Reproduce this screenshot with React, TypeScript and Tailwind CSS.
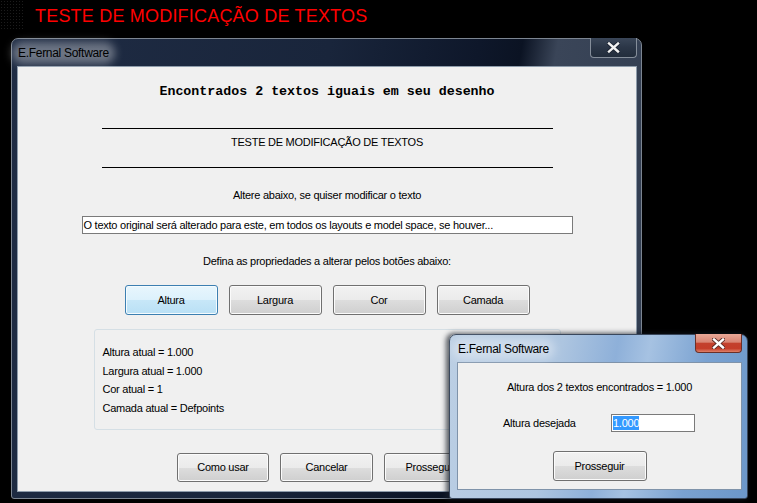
import React from "react";

const BTN =
  "flex items-center justify-center rounded-[3px] border border-[#707070] bg-[linear-gradient(to_bottom,#f2f2f2_0%,#ebebeb_50%,#dddddd_51%,#cfcfcf_100%)] shadow-[inset_0_0_0_1px_#fbfbfb] text-[11px] tracking-[-0.25px] text-black";
const BTN_FOCUS =
  "flex items-center justify-center rounded-[3px] border border-[#3c7fb1] bg-[linear-gradient(to_bottom,#e8f6fd_0%,#dcf1fc_50%,#c7e7f8_51%,#b9e0f5_100%)] shadow-[inset_0_0_0_1px_#f4fbfe] text-[11px] tracking-[-0.25px] text-black";

function CloseX({ color, outline }: { color: string; outline?: string }) {
  return (
    <svg width="13" height="11" viewBox="0 0 13 11">
      {outline && (
        <path d="M2 1.5 L11 9.5 M11 1.5 L2 9.5" stroke={outline} strokeWidth="4.2" strokeLinecap="square" />
      )}
      <path d="M2 1.5 L11 9.5 M11 1.5 L2 9.5" stroke={color} strokeWidth="2.4" strokeLinecap="square" />
    </svg>
  );
}

function TitleText() {
  return (
    <div className="relative ml-[1px] mt-[6px] h-[16px] flex items-center">
      <div className="absolute left-[-6px] right-[-6px] top-[-3px] bottom-[-3px] rounded-full bg-white/35 blur-[4px]" />
      <span className="relative text-[12px] leading-[16px] tracking-[-0.3px] text-black font-['Liberation_Sans',Arial,sans-serif]">
        E.Fernal Software
      </span>
    </div>
  );
}

export default function App() {
  return (
    <div className="relative w-[757px] h-[503px] overflow-hidden bg-black font-['Liberation_Sans',Arial,sans-serif]">
      <div className="absolute left-0 top-0 w-[24px] h-[30px] bg-[radial-gradient(#1c1c1c_0.8px,transparent_0.9px)] bg-[length:3px_3px]" />
      <div className="pl-[35px] pt-[6px] text-[18px] leading-[20px] tracking-[0.2px] text-[#ff0000]">
        TESTE DE MODIFICAÇÃO DE TEXTOS
      </div>

      {/* Main window */}
      <div className="absolute left-[11px] top-[38px] w-[631px] h-[461px] rounded-t-[7px] rounded-b-[3px] border border-[#7c8591] bg-[linear-gradient(100deg,#1f2c44_0%,#19253b_45%,#0e172a_66%,#0b1323_72%,#3a4558_77%,#303c50_100%)] flex flex-col pl-[5px] pr-[4px] pb-[6px]">
        <div className="h-[27px] flex justify-between items-start">
          <TitleText />
          <div className="mt-[-1px] w-[47px] h-[20px] rounded-b-[4px] border border-[#858e9a] border-t-0 bg-[linear-gradient(to_bottom,#3a4658_0%,#2b3647_50%,#222d3c_100%)] flex items-center justify-center">
            <CloseX color="#f2f2f2" outline="#1a2230" />
          </div>
        </div>
        <div className="flex-1 border border-[#8e9cab] bg-[#f0f0f0] flex flex-col items-center">
          <div className="mt-[17px] h-[16px] leading-[16px] text-[13.3px] font-bold text-black font-['Liberation_Mono',monospace]">
            Encontrados 2 textos iguais em seu desenho
          </div>
          <div className="mt-[28px] h-[1px] w-[451px] bg-black" />
          <div className="mt-[5px] h-[16px] leading-[16px] text-[11px] tracking-[-0.25px] text-black">
            TESTE DE MODIFICAÇÃO DE TEXTOS
          </div>
          <div className="mt-[17px] h-[1px] w-[451px] bg-black" />
          <div className="mt-[19px] h-[16px] leading-[16px] text-[11px] tracking-[-0.25px] text-black">
            Altere abaixo, se quiser modificar o texto
          </div>
          <div className="mt-[13px] h-[18px] w-[491px] border border-[#7a7a7a] bg-white pl-[1px] flex items-center text-[11px] tracking-[-0.25px] text-black whitespace-nowrap overflow-hidden">
            O texto original será alterado para este, em todos os layouts e model space, se houver...
          </div>
          <div className="mt-[19px] h-[16px] leading-[16px] text-[11px] tracking-[-0.25px] text-black">
            Defina as propriedades a alterar pelos botões abaixo:
          </div>
          <div className="mt-[16px] flex gap-[11px]">
            <div className={`${BTN_FOCUS} w-[93px] h-[30px]`}>Altura</div>
            <div className={`${BTN} w-[93px] h-[30px]`}>Largura</div>
            <div className={`${BTN} w-[93px] h-[30px]`}>Cor</div>
            <div className={`${BTN} w-[93px] h-[30px]`}>Camada</div>
          </div>
          <div className="mt-[14px] h-[101px] w-[467px] rounded-[3px] border border-[#d5dfe5] pl-[8px] pt-[13px] text-[11px] leading-[18.7px] tracking-[-0.25px] text-black">
            <div>Altura atual = 1.000</div>
            <div>Largura atual = 1.000</div>
            <div>Cor atual = 1</div>
            <div>Camada atual = Defpoints</div>
          </div>
          <div className="mt-[23px] flex gap-[11px]">
            <div className={`${BTN} w-[92px] h-[29px]`}>Como usar</div>
            <div className={`${BTN} w-[93px] h-[29px]`}>Cancelar</div>
            <div className={`${BTN} w-[93px] h-[29px]`}>Prosseguir</div>
          </div>
        </div>
      </div>

      {/* Secondary dialog */}
      <div className="absolute left-[449px] top-[334px] w-[299px] h-[165px] rounded-t-[7px] rounded-b-[3px] border border-[#39475c] bg-[linear-gradient(100deg,#bccfe4_0%,#adc5e0_35%,#8eb0d9_52%,#a6c2e2_62%,#7aa2d1_80%,#6c97c9_100%)] shadow-[-2px_0_5px_1px_rgba(20,25,35,0.7)] flex flex-col pl-[7px] pr-[5px] pb-[8px]">
        <div className="h-[27px] flex justify-between items-start">
          <TitleText />
          <div className="mt-[-1px] w-[47px] h-[19px] rounded-b-[4px] border border-[#6b3028] border-t-0 bg-[linear-gradient(to_bottom,#e9a898_0%,#d98573_45%,#c3412d_52%,#c43d29_80%,#df8169_100%)] flex items-center justify-center">
            <CloseX color="#ffffff" outline="#5a2a24" />
          </div>
        </div>
        <div className="flex-1 border border-[#7f93aa] bg-[#f0f0f0] flex flex-col">
          <div className="mt-[16px] h-[16px] leading-[16px] text-center text-[11px] tracking-[-0.25px] text-black">
            Altura dos 2 textos encontrados = 1.000
          </div>
          <div className="mt-[19px] h-[18px] flex items-center pl-[45px]">
            <div className="w-[108px] text-[11px] tracking-[-0.25px] text-black">Altura desejada</div>
            <div className="w-[84px] h-[18px] border border-[#7a7a7a] bg-white pl-[1px] flex items-center text-[11px] tracking-[-0.25px]">
              <span className="bg-[#3399ff] text-white leading-[14px]">1.000</span>
            </div>
          </div>
          <div className={`${BTN} mt-[19px] self-center w-[94px] h-[30px]`}>Prosseguir</div>
        </div>
      </div>
    </div>
  );
}
